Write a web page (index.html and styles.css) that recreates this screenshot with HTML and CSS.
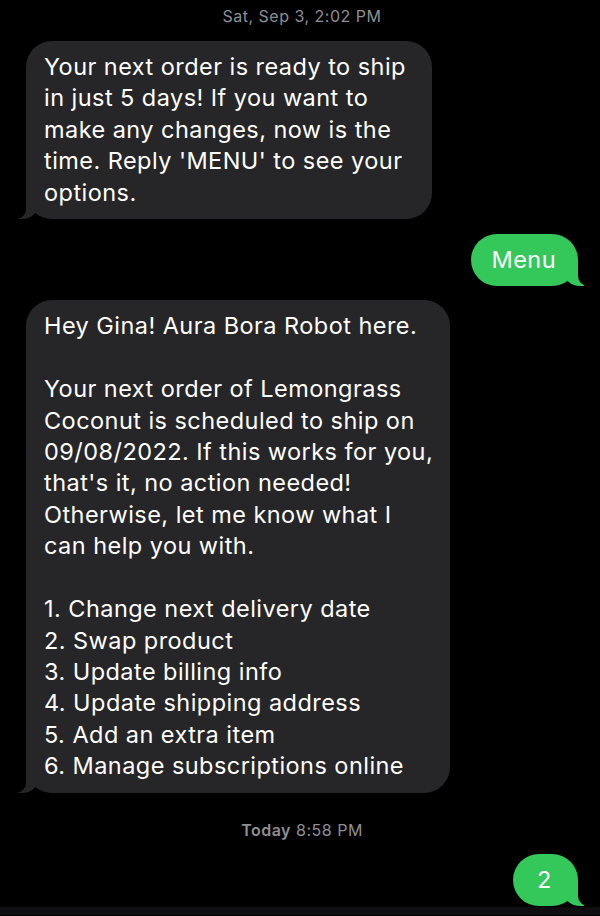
FILE: index.html
```html
<!DOCTYPE html>
<html lang="en">
<head>
    <meta charset="UTF-8">
    <meta name="viewport" content="width=device-width, initial-scale=1.0">
    <link rel="stylesheet" href="styles.css">
</head>
<body>
    <div class="thread">
        <div class="stamp">Sat, Sep 3, 2:02 PM</div>

        <div class="bubble in first">
            Your next order is ready to ship<br>
            in just 5 days! If you want to<br>
            make any changes, now is the<br>
            time. Reply 'MENU' to see your<br>
            options.
        </div>

        <div class="bubble out">Menu</div>

        <div class="bubble in">
            Hey Gina! Aura Bora Robot here.<br>
            <br>
            Your next order of Lemongrass<br>
            Coconut is scheduled to ship on<br>
            09/08/2022. If this works for you,<br>
            that's it, no action needed!<br>
            Otherwise, let me know what I<br>
            can help you with.<br>
            <br>
            1. Change next delivery date<br>
            2. Swap product<br>
            3. Update billing info<br>
            4. Update shipping address<br>
            5. Add an extra item<br>
            6. Manage subscriptions online
        </div>

        <div class="stamp today"><b>Today</b> 8:58 PM</div>

        <div class="bubble out short">2</div>
    </div>
    <div class="composer-edge"></div>
</body>
</html>
```

FILE: styles.css
```css
/* page */
body {
    background-color: #000;
    margin: 0;
    font-family: Inter, "Noto Sans", "Liberation Sans", sans-serif;
    color: #fff;
}

/* the message list */
.thread {
    display: flex;
    flex-direction: column;
    padding: 6px 22px 0 26px;
}

/* timestamps */
.stamp {
    text-align: center;
    font-size: 16px;
    line-height: 20px;
    letter-spacing: 0.5px;
    color: #8e8e93;
}

.stamp b {
    font-weight: 600;
}

.today {
    margin-top: 27px;
}

/* bubbles */
.bubble {
    position: relative;
    box-sizing: border-box;
    max-width: 424px;
    font-size: 23.5px;
    line-height: 31.4px;
    letter-spacing: 0.45px;
    padding: 10px 26px 11px 18px;
    border-radius: 26px;
    white-space: nowrap;
}

.bubble.in {
    align-self: flex-start;
    background: #262628;
    margin-top: 14px;
}

.bubble.first {
    margin-top: 15px;
}

.bubble.out {
    align-self: flex-end;
    background: #34c759;
    padding: 10px 22px 11px 20px;
    margin-top: 15px;
}

.bubble.short {
    min-width: 65px;
    text-align: center;
    margin-top: 14px;
}

/* tails */
.bubble::before,
.bubble::after {
    content: "";
    position: absolute;
    bottom: 0;
    height: 25px;
}

.bubble.in::before {
    left: -8px;
    width: 20px;
    background: #262628;
    border-bottom-right-radius: 16px 14px;
}

.bubble.in::after {
    left: -26px;
    width: 26px;
    background: #000;
    border-bottom-right-radius: 10px;
}

.bubble.out::before {
    right: -6px;
    width: 20px;
    background: #34c759;
    border-bottom-left-radius: 16px 14px;
}

.bubble.out::after {
    right: -26px;
    width: 26px;
    background: #000;
    border-bottom-left-radius: 10px;
}

/* top of the input bar */
.composer-edge {
    height: 8px;
    margin-top: 1px;
    background: #0e0e10;
}
```
